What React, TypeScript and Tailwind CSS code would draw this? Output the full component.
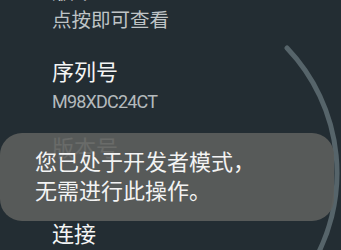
const font = { fontFamily: 'Roboto, "Noto Sans CJK SC", sans-serif' };

const Arc = () => (
  <svg
    className="pointer-events-none absolute left-0 top-0"
    width="341"
    height="250"
    viewBox="0 0 341 250"
    fill="none"
  >
    <path
      d="M287 48 A181 181 0 0 1 308.8 270"
      stroke="#56646a"
      strokeWidth="5"
      strokeLinecap="round"
    />
  </svg>
);

const App = () => {
  return (
    <div
      className="relative h-[250px] w-[341px] overflow-hidden bg-[#232d33]"
      style={font}
    >
      {/* List */}

      <div className="mt-[-23px] pl-[52px]">
        <div>
          <p className="text-[22px] leading-[28px] text-[#f4f5f5]">版本</p>
          <p className="mt-[3px] text-[19.5px] leading-[26px] text-[#bfc4c6]">
            点按即可查看
          </p>
        </div>

        <div className="mt-[25px]">
          <p className="text-[22px] leading-[28px] text-[#f4f5f5]">序列号</p>
          <p className="mt-[2px] text-[18px] leading-[26px] tracking-[-0.8px] text-[#b4babd]">
            M98XDC24CT
          </p>
        </div>

        <div className="mt-[20px]">
          <p className="text-[22px] leading-[28px] text-[#f4f5f5]">版本号</p>
        </div>

        <div className="mt-[58px]">
          <p className="text-[22px] leading-[28px] text-[#f4f5f5]">连接</p>
        </div>
      </div>

      <Arc />

      {/* Toast */}

      <div className="absolute left-0 top-[133px] w-[334px] rounded-[22px] bg-[#5c5e5c]/[0.92] py-[15px] pl-[35px]">
        <p className="text-[22px] leading-[29px] text-[#f3f3f3]">
          您已处于开发者模式，
        </p>
        <p className="text-[22px] leading-[29px] text-[#f3f3f3]">
          无需进行此操作。
        </p>
      </div>
    </div>
  );
};

export default App;
